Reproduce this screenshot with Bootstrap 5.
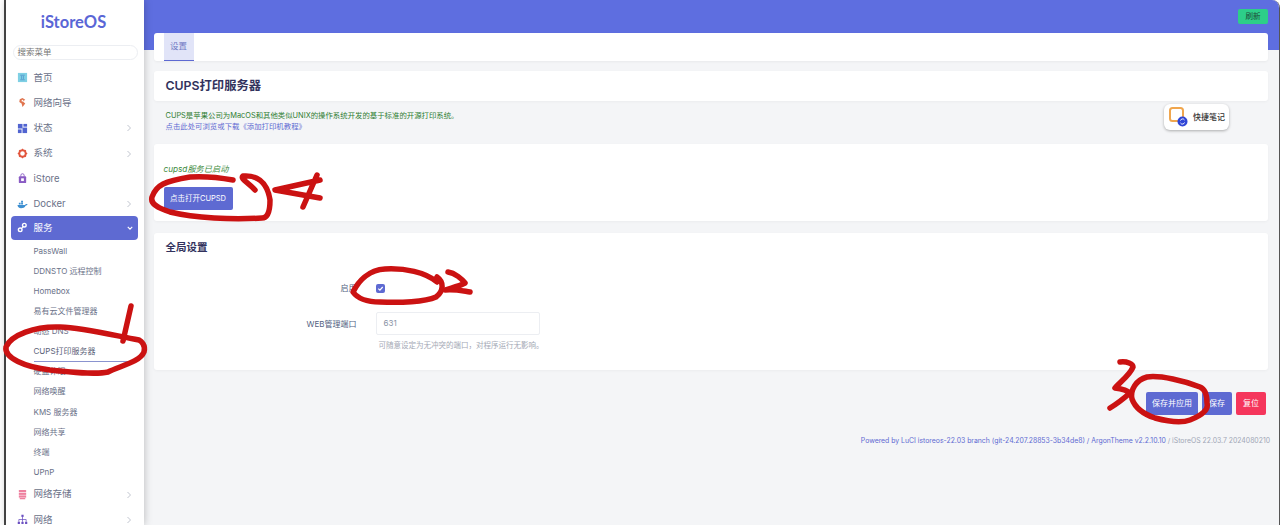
<!DOCTYPE html>
<html lang="zh-CN">
<head>
<meta charset="utf-8">
<title>CUPS打印服务器</title>
<link href="https://cdn.jsdelivr.net/npm/bootstrap@5.3.0/dist/css/bootstrap.min.css" rel="stylesheet">
<style>
html,body{height:525px;overflow:hidden}
body{font-family:Inter,"Noto Sans CJK SC",sans-serif;background:#f4f5f7;color:#525f7f;position:relative;font-size:9px}
.page-shell{height:525px;display:flex;background:#fff}
.side-gutter{width:4px;flex:none;background:#fff}
.side-rule{width:1.5px;flex:none;background:#4a4a4a}
.side-bar{width:138px;flex:none;background:#fff;box-shadow:0 0 8px rgba(0,0,0,.25);position:relative;z-index:2;overflow:hidden;height:525px}
.brand-name{font-family:Lato,"Noto Sans",sans-serif;font-size:16.5px;font-weight:700;color:#5a66d6;text-align:center;height:44px;line-height:44px;margin-left:-2px}
.menu-search{margin:1px 6px 0 7px;height:15px;border:1px solid #eceef2;border-radius:8px;padding:0 4px;font-size:8.5px;line-height:13px;color:#777}
.menu-list{list-style:none;margin:0;padding:0}
.menu-top{margin-top:5px}
.menu-row{height:25.3px;display:flex;align-items:center;padding-left:11px;padding-right:12px;font-size:9.5px;color:#6a7188;gap:6px}
.menu-row svg.mi{width:11px;height:11px;flex:none}
.menu-row .chev{margin-left:auto;width:6px;height:8px}
.menu-row.active-row{background:#5e6ad2;color:#fff;height:24px;border-radius:4px;margin:-1px 6px 0 5px;padding-left:6px;padding-right:5px;gap:6px}
.sub-list{margin-top:1px}
.sub-row{height:20.1px;line-height:20.1px;padding-left:28px;font-size:8px;color:#6a7188;position:relative}
.sub-row.here{color:#5b6277}
.sub-row.here::after{content:"";position:absolute;left:28px;right:10px;bottom:-1px;height:1.5px;background:#8a93cf}
.content-pane{flex:1;min-width:0;background:#f4f5f7;position:relative;border-top-right-radius:8px;overflow:hidden;border-right:1px solid #555}
.top-band{height:50px;background:#5e6ee0;display:flex;justify-content:flex-end;align-items:flex-start;padding:9px 11px 0 0}
.refresh-btn{width:30px;height:15px;background:#2dce89;color:#1f4a38;font-size:7.5px;border-radius:2px;line-height:15px;text-align:center}
.pane-stack{margin:-17px 11px 0 10px;position:relative}
.tab-strip{height:28px;background:#fff;border-radius:3px;padding-left:10px;box-shadow:0 1px 3px rgba(0,0,0,.05)}
.tab-cell{width:30px;height:28px;background:#e1e4f8;color:#7079c4;font-size:8.5px;line-height:27px;text-align:center;border-bottom:1px solid #5e6ad2}
.title-card{height:30px;margin-top:10px;background:#fff;border-radius:3px;font-size:12.3px;font-weight:600;color:#32325d;line-height:30px;padding-left:12px;box-shadow:0 1px 3px rgba(0,0,0,.04)}
.desc-block{height:43px;padding:9px 12px 0;font-size:7.4px;line-height:11px;position:relative}
.desc-green{color:#2f7d32}
.desc-link{color:#5e6ad2}
.note-chip{position:absolute;right:39px;top:3px;width:65px;height:26px;background:#fff;border-radius:6px;box-shadow:0 1px 3px rgba(0,0,0,.3);display:flex;align-items:center;gap:5px;padding-left:5px;font-size:8px;color:#333;font-weight:500}
.note-chip svg{flex:none}
.plain-card{background:#fff;border-radius:3px;box-shadow:0 1px 3px rgba(0,0,0,.04)}
.svc-card{height:77px;padding:20px 10px 0}
.svc-state{font-size:8.2px;line-height:10px;color:#3d8b3d;font-style:italic}
.main-act{display:block;margin-top:13px;width:69px;height:23px;background:#5e6ad2;color:#fff;font-size:7.5px;line-height:23px;text-align:center;border-radius:2px}
.conf-card{height:137px;margin-top:12px;padding:8px 12px 0;position:relative}
.conf-head{font-size:10.5px;font-weight:600;color:#32325d;line-height:14px;height:14px}
.conf-row{display:flex;align-items:center}
.conf-label{width:191px;text-align:right;font-size:8px;color:#525f7f;flex:none}
.conf-field{margin-left:19px}
.row-enable{margin-top:26px;height:14px}
.tick-box{width:9px;height:9px;border-radius:2px;background:#5e6ad2;display:flex;align-items:center;justify-content:center}
.row-port{margin-top:17px;height:23px}
.port-input{width:164px;height:23px;border:1px solid #eceef2;border-radius:2px;background:#fff;padding-left:7px;font-size:8px;line-height:21px;color:#8a93a5}
.conf-hint{margin:6px 0 0 213px;font-size:7.5px;line-height:10px;color:#a4a9b5}
.action-bar{display:flex;justify-content:flex-end;gap:4px;margin-top:22px;padding-right:2px}
.act-btn{height:23px;line-height:23px;text-align:center;color:#fff;font-size:8px;border-radius:2px;background:#5e6ad2}
.w-apply{width:52px}.w-save{width:30px}
.w-reset{width:30px;background:#f5365c}
.foot-line{margin-top:21px;text-align:right;font-size:6.86px;line-height:10px;color:#5e6ad2;margin-right:-2px;white-space:nowrap}
.foot-line span{color:#a0a6b6}
.ink-layer{position:absolute;left:0;top:0;width:1280px;height:525px;z-index:5;pointer-events:none}
.ink-layer path{fill:none;stroke:#cb1212;stroke-width:5.5;stroke-linecap:round;stroke-linejoin:round}
</style>
</head>
<body>
<div class="page-shell">
  <div class="side-gutter"></div>
  <div class="side-rule"></div>
  <nav class="side-bar">
    <div class="brand-name">iStoreOS</div>
    <div class="menu-search">搜索菜单</div>
    <ul class="menu-list menu-top">
      <li class="menu-row"><svg class="mi" viewBox="0 0 12 12"><rect x="1" y="1" width="10" height="10" fill="#7fd0e4"/><path d="M3.500 3.500h5M3.500 8.500h5M5 4v4M7 4v4" stroke="#5a9fd0" fill="none"/></svg>首页</li>
      <li class="menu-row"><svg class="mi" viewBox="0 0 12 12"><path d="M3 2.500 6 1l3 2-2.500 2L9 7 6 11 5 7 2.500 5.500z" fill="#e0754f"/><circle cx="6" cy="4" r="1" fill="#fff"/></svg>网络向导</li>
      <li class="menu-row"><svg class="mi" viewBox="0 0 12 12"><g fill="#5164d0"><rect x="1" y="1" width="5" height="5"/><rect x="7" y="1" width="4" height="3"/><rect x="1" y="7" width="4" height="4"/><rect x="6" y="5" width="5" height="6"/></g></svg>状态<svg class="chev" viewBox="0 0 6 8"><path d="M1.500 1 4.500 4 1.500 7" fill="none" stroke="#c2c6d0"/></svg></li>
      <li class="menu-row"><svg class="mi" viewBox="0 0 12 12"><circle cx="6" cy="6" r="3.600" fill="none" stroke="#e2553d" stroke-width="2.200"/><path d="M6 .8v1.500M6 9.700v1.500M.8 6h1.500M9.700 6h1.500M2.300 2.300l1 1M8.700 8.700l1 1M2.300 9.700l1-1M8.700 3.300l1-1" stroke="#e2553d" stroke-width="1.200"/></svg>系统<svg class="chev" viewBox="0 0 6 8"><path d="M1.500 1 4.500 4 1.500 7" fill="none" stroke="#c2c6d0"/></svg></li>
      <li class="menu-row"><svg class="mi" viewBox="0 0 12 12"><rect x="2" y="3.500" width="8" height="7.500" rx="1" fill="#8a5cc4"/><path d="M4.200 4V2.600a1.800 1.800 0 0 1 3.600 0V4" fill="none" stroke="#8a5cc4"/><rect x="4.500" y="5.800" width="3" height="3" fill="#fff"/></svg>iStore</li>
      <li class="menu-row"><svg class="mi" viewBox="0 0 12 12"><path d="M.5 6.500h8.200c.5-.9 1.500-1.200 2.800-.8-.5 1.200-1.300 1.500-2.200 1.600C8.500 9.500 6.500 10 4.500 10 2 10 .7 8.500.5 6.500z" fill="#3d8fd1"/><path d="M2 4h2v2H2zM4.500 4h2v2h-2zM4.500 1.800h2v2h-2z" fill="#3d8fd1"/></svg>Docker<svg class="chev" viewBox="0 0 6 8"><path d="M1.500 1 4.500 4 1.500 7" fill="none" stroke="#c2c6d0"/></svg></li>
      <li class="menu-row active-row"><svg class="mi" viewBox="0 0 12 12"><g fill="none" stroke="#fff" stroke-width="1.500"><circle cx="8" cy="3.500" r="2"/><circle cx="3.500" cy="8.500" r="2"/></g><path d="M5 7l2-2" stroke="#fff" stroke-width="1.300"/></svg>服务<svg class="chev" viewBox="0 0 8 6"><path d="M1 1.500 4 4.500 7 1.500" fill="none" stroke="#fff" stroke-width="1.500"/></svg></li>
    </ul>
    <div class="sub-list">
      <div class="sub-row">PassWall</div>
      <div class="sub-row">DDNSTO 远程控制</div>
      <div class="sub-row">Homebox</div>
      <div class="sub-row">易有云文件管理器</div>
      <div class="sub-row">动态 DNS</div>
      <div class="sub-row here">CUPS打印服务器</div>
      <div class="sub-row">硬盘休眠</div>
      <div class="sub-row">网络唤醒</div>
      <div class="sub-row">KMS 服务器</div>
      <div class="sub-row">网络共享</div>
      <div class="sub-row">终端</div>
      <div class="sub-row">UPnP</div>
    </div>
    <ul class="menu-list">
      <li class="menu-row"><svg class="mi" viewBox="0 0 12 12"><g fill="#ee7f9e"><rect x="2" y="1" width="8" height="2.400" rx=".6"/><rect x="2" y="4" width="8" height="2.400"/><rect x="2" y="7" width="8" height="2.400"/><rect x="3" y="9.800" width="6" height="1.400"/></g></svg>网络存储<svg class="chev" viewBox="0 0 6 8"><path d="M1.500 1 4.500 4 1.500 7" fill="none" stroke="#c2c6d0"/></svg></li>
      <li class="menu-row"><svg class="mi" viewBox="0 0 12 12"><g fill="#6a4fc0"><rect x="4.800" y=".8" width="2.400" height="2.400"/><rect x=".8" y="8.500" width="2.400" height="2.400"/><rect x="4.800" y="8.500" width="2.400" height="2.400"/><rect x="8.800" y="8.500" width="2.400" height="2.400"/></g><path d="M6 3v5.500M2 8.500V6h8v2.500" fill="none" stroke="#6a4fc0" stroke-width=".8"/></svg>网络<svg class="chev" viewBox="0 0 6 8"><path d="M1.500 1 4.500 4 1.500 7" fill="none" stroke="#c2c6d0"/></svg></li>
    </ul>
  </nav>
  <main class="content-pane">
    <div class="top-band"><div class="refresh-btn">刷新</div></div>
    <div class="pane-stack">
      <div class="tab-strip"><div class="tab-cell">设置</div></div>
      <div class="title-card">CUPS打印服务器</div>
      <div class="desc-block">
        <div class="desc-green">CUPS是苹果公司为MacOS和其他类似UNIX的操作系统开发的基于标准的开源打印系统。</div>
        <div class="desc-link">点击此处可浏览或下载《添加打印机教程》</div>
        <div class="note-chip"><svg width="19" height="20" viewBox="0 0 19 20"><rect x="1" y="1" width="13" height="13" rx="2.500" fill="#fff" stroke="#f0a64e" stroke-width="2"/><circle cx="13.500" cy="14.500" r="5" fill="#2f45d6"/><path d="M11.500 13.500a2.200 2.200 0 0 1 4-.5M15.500 15.500a2.200 2.200 0 0 1-4 .5" fill="none" stroke="#fff"/></svg>快捷笔记</div>
      </div>
      <section class="plain-card svc-card">
        <div class="svc-state">cupsd服务已启动</div>
        <div class="main-act">点击打开CUPSD</div>
      </section>
      <section class="plain-card conf-card">
        <div class="conf-head">全局设置</div>
        <div class="conf-row row-enable"><div class="conf-label">启用</div><div class="conf-field"><div class="tick-box"><svg width="7" height="7" viewBox="0 0 7 7"><path d="M1.300 3.600 2.900 5.100 5.700 2" fill="none" stroke="#fff" stroke-width="1.200"/></svg></div></div></div>
        <div class="conf-row row-port"><div class="conf-label">WEB管理端口</div><div class="conf-field"><div class="port-input">631</div></div></div>
        <div class="conf-hint">可随意设定为无冲突的端口，对程序运行无影响。</div>
      </section>
      <div class="action-bar">
        <div class="act-btn w-apply">保存并应用</div>
        <div class="act-btn w-save">保存</div>
        <div class="act-btn w-reset">复位</div>
      </div>
      <div class="foot-line">Powered by LuCI istoreos-22.03 branch (git-24.207.28853-3b34de8) / ArgonTheme v2.2.10.10 <span>/ iStoreOS 22.03.7 2024080210</span></div>
    </div>
  </main>
</div>
<svg class="ink-layer" viewBox="0 0 1280 525">
  <path d="M139 340C112 335 84 328 60 327 35 326 11 335 6 347 4 358 25 367 50 370 72 372 95 375 108 372 120 366 140 362 144 352 146 345 141 341 139 340"/>
  <path d="M131 306 123 341"/>
  <path d="M255 190C248 182 240 179 243 176 255 175 267 180 270 200 270 210 268 218 262 218 232 220 195 218 170 212 158 208 150 204 152 197 156 185 165 181 190 177 205 176 222 178 233 180"/>
  <path d="M320 180 275 190 320 198M317 175 303 207"/>
  <path d="M437 282C425 272 405 268 385 269 368 270 358 282 353 292 358 299 367 302 380 302 400 303 425 302 436 297 444 291 444 282 437 277"/>
  <path d="M448 272C455 273 462 279 465 283 458 287 450 288 445 290 455 289 463 291 470 292"/>
  <path d="M1120 362C1127 361 1133 364 1133 367 1130 375 1120 382 1115 388 1122 389 1128 391 1130 393 1122 400 1115 405 1110 408"/>
  <path d="M1207 403C1207 395 1205 389 1200 387 1185 381 1160 375 1147 377 1136 380 1130 390 1132 399 1136 410 1146 415 1155 418 1170 422 1182 423 1190 420 1200 416 1209 410 1207 403"/>
</svg>
</body>
</html>
